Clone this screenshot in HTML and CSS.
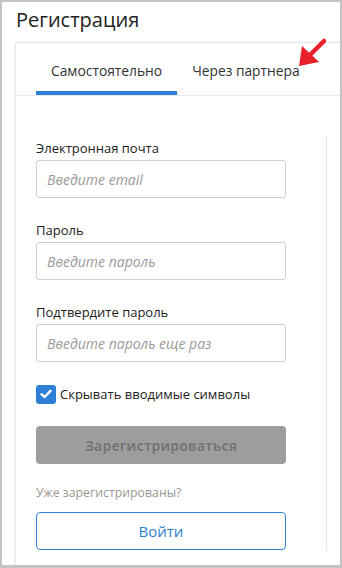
FILE: index.html
```html
<!DOCTYPE html>
<html lang="ru">
<head>
<meta charset="utf-8">
<title>Регистрация</title>
<link rel="stylesheet" href="styles.css">
</head>
<body>
<div class="frame">
  <h1 class="title">Регистрация</h1>
  <div class="card">
    <div class="tabs">
      <div class="tab tab-active">Самостоятельно</div>
      <div class="tab">Через партнера</div>
    </div>
    <div class="panel">
      <form class="form">
        <div class="group">
          <label class="label">Электронная почта</label>
          <input class="input" type="text" placeholder="Введите email">
        </div>
        <div class="group">
          <label class="label">Пароль</label>
          <input class="input" type="password" placeholder="Введите пароль">
        </div>
        <div class="group">
          <label class="label">Подтвердите пароль</label>
          <input class="input" type="password" placeholder="Введите пароль еще раз">
        </div>
        <div class="check-row">
          <span class="checkbox">
            <svg width="12" height="10" viewBox="0 0 12 10"><path d="M1.5 5.2 L4.6 8 L10.5 1.8" fill="none" stroke="#fff" stroke-width="2.4" stroke-linecap="round" stroke-linejoin="round"/></svg>
          </span>
          <span class="check-label">Скрывать вводимые символы</span>
        </div>
        <div class="btn btn-disabled">Зарегистрироваться</div>
        <div class="already">Уже зарегистрированы?</div>
        <div class="btn btn-outline">Войти</div>
      </form>
    </div>
  </div>
  <svg class="arrow" width="40" height="40" viewBox="0 0 40 40">
    <path d="M14 24 L28 10" stroke="#e8202a" stroke-width="4.5" stroke-linecap="round"/>
    <polygon points="3,35 6,15 23,31" fill="#e8202a"/>
  </svg>
</div>
</body>
</html>
```

FILE: styles.css
```css
* { box-sizing: border-box; }
html, body { margin: 0; padding: 0; background: #fff; }
body { font-family: "Open Sans", "Noto Sans", sans-serif; color: #222; }

.frame {
  position: relative;
  width: 342px;
  height: 568px;
  border: 2px solid #c4c4c4;
  border-bottom-width: 3px;
  overflow: hidden;
  padding: 5px 0 0 0;
  background: #fff;
}

.title {
  margin: 0 0 9px 14px;
  font-size: 20px;
  line-height: 26px;
  font-weight: 400;
  color: #222;
}

.card {
  margin-left: 13px;
  border: 1px solid #e3e6eb;
  border-right: none;
  border-radius: 3px 0 0 0;
  box-shadow: -1px 0 3px rgba(0, 0, 0, 0.06);
  height: 600px;
}

.tabs {
  display: flex;
  padding-left: 20px;
  padding-top: 18px;
  border-bottom: 1px solid #e6e9ee;
}

.tab {
  padding: 0 15px 10px 15px;
  font-size: 13.8px;
  line-height: 20px;
  color: #333;
  border-bottom: 4px solid transparent;
}

.tab-active { border-bottom-color: #2b7fd4; }

.panel {
  margin: 39px 0 0 20px;
  width: 291px;
  border-right: 1px solid #dfe5ee;
  padding-top: 4px;
}

.form { width: 250px; display: flex; flex-direction: column; }

.group { display: flex; flex-direction: column; margin-bottom: 23px; }
.group:nth-child(3) { margin-bottom: 22px; }

.label {
  font-size: 13px;
  line-height: 18px;
  margin-bottom: 3px;
  color: #222;
}

.input {
  width: 250px;
  height: 38px;
  border: 1px solid #cfcfcf;
  border-radius: 3px;
  padding: 0 10px;
  font-family: "Open Sans", "Noto Sans", sans-serif;
  font-size: 14px;
  color: #333;
  outline: none;
  margin: 0;
}
.input::placeholder { color: #9a9a9a; font-style: italic; }

.check-row { display: flex; align-items: center; height: 20px; gap: 4px; }

.checkbox {
  width: 20px;
  height: 19px;
  border-radius: 3px;
  background: #2d7fd8;
  display: flex;
  align-items: center;
  justify-content: center;
}

.check-label { font-size: 13px; line-height: 20px; color: #222; }

.btn {
  height: 38px;
  border-radius: 4px;
  display: flex;
  align-items: center;
  justify-content: center;
  font-size: 15px;
}

.btn-disabled {
  margin-top: 22px;
  background: #9d9d9d;
  color: #747474;
  font-weight: 700;
  font-size: 14px;
  text-shadow: 0 0 1px #b8b8b8;
}

.already {
  margin-top: 20px;
  font-size: 12.3px;
  line-height: 18px;
  color: #9b9793;
}

.btn-outline {
  margin-top: 10px;
  border: 1px solid #2f80d6;
  color: #2f7fd3;
  background: #fff;
}

.arrow {
  position: absolute;
  left: 294px;
  top: 29px;
}
```
